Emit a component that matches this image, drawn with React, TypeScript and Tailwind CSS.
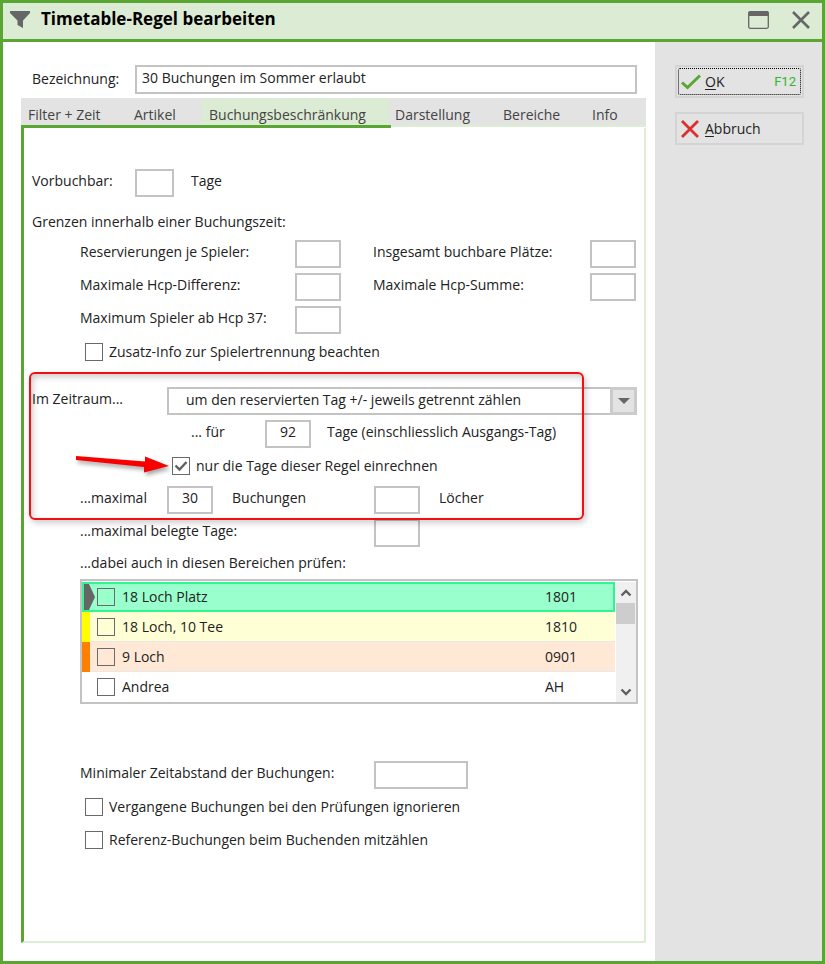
import { useState, type ReactNode } from "react";

const fieldClass =
  "h-[28px] shrink-0 border-2 border-[#c3c3c3] bg-white pb-1 text-center text-[#222] outline-none";

function Field({ id, value = "", wide = false }: { id: string; value?: string; wide?: boolean }) {
  return <input id={id} defaultValue={value} className={`${fieldClass} ${wide ? "w-[94px]" : "w-[46px]"}`} />;
}

function Label({ htmlFor, className = "", children }: { htmlFor: string; className?: string; children: ReactNode }) {
  return (
    <label htmlFor={htmlFor} className={`shrink-0 pb-1 whitespace-nowrap ${className}`}>
      {children}
    </label>
  );
}

function Tick({ id, checked = false }: { id: string; checked?: boolean }) {
  const [on, setOn] = useState(checked);
  return (
    <span className="relative block size-[18px] shrink-0">
      <input
        id={id}
        type="checkbox"
        checked={on}
        onChange={() => setOn(!on)}
        className="block size-[18px] appearance-none border border-[#6a6a6a]"
      />
      {on && (
        <svg viewBox="0 0 18 18" className="pointer-events-none absolute inset-0" fill="none" stroke="#606060" strokeWidth="2.4">
          <path d="M3.5 8.5 L7.5 12.5 L14.5 5" />
        </svg>
      )}
    </span>
  );
}

function CheckRow({ id, checked, className = "", children }: { id: string; checked?: boolean; className?: string; children: ReactNode }) {
  return (
    <div className={`flex h-[33px] items-center gap-1.5 pb-0.5 ${className}`}>
      <Tick id={id} checked={checked} />
      <label htmlFor={id} className="whitespace-nowrap">{children}</label>
    </div>
  );
}

const tabs = [
  { name: "Filter + Zeit", className: "w-[106px] pl-[7px]" },
  { name: "Artikel", className: "w-[75px] pl-[7px]" },
  { name: "Buchungsbeschränkung", className: "w-[188px] pl-[7px]", active: true },
  { name: "Darstellung", className: "w-[106px] pl-[5px]" },
  { name: "Bereiche", className: "w-[89px] pl-[7px]" },
  { name: "Info", className: "grow pl-[7px]" },
];

const areas = [
  { name: "18 Loch Platz", code: "1801", row: "bg-[#99ffcc] outline-2 -outline-offset-2 outline-[#33f58f]", mark: "" },
  { name: "18 Loch, 10 Tee", code: "1810", row: "bg-[#ffffd5] shadow-[inset_0_-1px_#e8e8e8]", mark: "bg-[#ffff00]" },
  { name: "9 Loch", code: "0901", row: "bg-[#ffe9d6] shadow-[inset_0_-1px_#e8e8e8]", mark: "bg-[#ff8000]" },
  { name: "Andrea", code: "AH", row: "bg-white", mark: "" },
];

function AreaList() {
  return (
    <div className="mr-1.5 ml-12 flex h-[125px] border-2 border-[#c3c3c3] bg-white pt-px">
      <table className="h-[120px] min-w-0 grow border-collapse">
        <tbody>
          {areas.map((a, i) => (
            <tr key={a.name} className={`h-[30px] ${a.row}`}>
              <td className="w-2 p-0">
                {i === 0 ? (
                  <svg viewBox="0 0 13 26" className="-mr-2 ml-px h-[26px] w-[13px]">
                    <path d="M0 0 H6 L12 13 L6 26 H0 Z" fill="#666" />
                  </svg>
                ) : (
                  <div className={`h-[30px] w-2 ${a.mark}`} />
                )}
              </td>
              <td className="p-0">
                <div className="flex items-center gap-[7px] pl-[7px]">
                  <Tick id={`area-${a.code}`} />
                  <label htmlFor={`area-${a.code}`}>{a.name}</label>
                </div>
              </td>
              <td className="w-[70px] p-0">{a.code}</td>
            </tr>
          ))}
        </tbody>
      </table>
      <div className="ml-px flex w-[20px] shrink-0 flex-col bg-[#f0f0f0]" aria-hidden="true">
        <svg viewBox="0 0 20 21" className="h-[21px]" fill="none" stroke="#606060" strokeWidth="2.4">
          <path d="M5.5 13.5 L10 9 L14.5 13.5" />
        </svg>
        <div className="h-[21px] w-[19px] bg-[#cdcdcd]" />
        <svg viewBox="0 0 20 21" className="mt-auto h-[21px]" fill="none" stroke="#606060" strokeWidth="2.4">
          <path d="M5.5 8.5 L10 13 L14.5 8.5" />
        </svg>
      </div>
    </div>
  );
}

export default function App() {
  return (
    <div className="flex min-h-screen flex-col border-[3px] border-[#5aa633] bg-white font-['Open_Sans','Noto_Sans',sans-serif] text-[14px] leading-[18px] text-[#222]">
      <header className="flex h-[39px] items-center border-b-[3px] border-[#5aa633] bg-[#dcebd3] pr-3 pb-0.5 pl-[7px]">
        <svg viewBox="0 0 20 18" className="h-[18px] w-[20px]" fill="#666">
          <path d="M0 0 H20 V2 L13 9.500 V17 L7.500 14 V9.500 L0 2 Z" />
        </svg>
        <h1 className="ml-[11px] pb-0.5 text-[17px] leading-[22px] font-bold text-black">Timetable-Regel bearbeiten</h1>
        <button aria-label="Maximieren" className="ml-auto">
          <svg viewBox="0 0 21 18" className="h-[18px] w-[21px]">
            <rect x="0.700" y="0.700" width="19.600" height="16.600" rx="1.500" fill="none" stroke="#666" strokeWidth="1.300" />
            <path d="M0.500 1.500 Q0.500 0 2 0 H19 Q20.500 0 20.500 1.500 V5 H0.500 Z" fill="#666" />
          </svg>
        </button>
        <button aria-label="Schliessen" className="ml-[23px]">
          <svg viewBox="0 0 18 18" className="size-[18px]" stroke="#666" strokeWidth="2.600">
            <path d="M1 1 L17 17 M17 1 L1 17" />
          </svg>
        </button>
      </header>

      <div className="flex grow">
        <main className="flex min-w-0 grow flex-col pr-[9px] pb-[18px] pl-[18px]">
          <div className="mt-[23px] flex h-[29px] items-center pr-[9px] pl-[11px]">
            <label htmlFor="bezeichnung" className="w-[103px] shrink-0 pb-0.5">Bezeichnung:</label>
            <input
              id="bezeichnung"
              defaultValue="30 Buchungen im Sommer erlaubt"
              className="h-[29px] min-w-0 grow border-2 border-[#c3c3c3] px-[5px] pb-1 text-[#222] outline-none"
            />
          </div>

          <div role="tablist" className="mt-1 flex h-[27px] bg-[#e3e3e3] text-[#444]">
            {tabs.map((t) => (
              <button
                key={t.name}
                role="tab"
                aria-selected={!!t.active}
                className={`shrink-0 border-r border-[#dfe7da] pt-1.5 text-left whitespace-nowrap ${t.className} ${t.active ? "bg-[#dcebd3]" : ""}`}
              >
                {t.name}
              </button>
            ))}
          </div>
          <div className="flex h-[3px]">
            <div className="w-[370px] bg-[#5aa633]" />
            <div className="grow border-t-2 border-[#dcefd3]" />
          </div>

          <section className="grow border-r-2 border-b-2 border-l-3 border-[#dcefd3] border-l-[#5aa633] pt-[38px] pl-2">
            <div className="flex h-[33px] items-center">
              <Label htmlFor="vorbuchbar" className="w-[103px]">Vorbuchbar:</Label>
              <input id="vorbuchbar" className={`${fieldClass} w-[39px]`} />
              <Label htmlFor="vorbuchbar" className="ml-[17px]">Tage</Label>
            </div>

            <h2 className="mt-2 flex h-[30px] items-center">Grenzen innerhalb einer Buchungszeit:</h2>
            <div className="mr-2 ml-12">
              <div className="flex h-[33px] items-center">
                <Label htmlFor="res" className="w-[215px]">Reservierungen je Spieler:</Label>
                <Field id="res" />
                <Label htmlFor="plaetze" className="mr-auto ml-8">Insgesamt buchbare Plätze:</Label>
                <Field id="plaetze" />
              </div>
              <div className="flex h-[33px] items-center">
                <Label htmlFor="diff" className="w-[215px]">Maximale Hcp-Differenz:</Label>
                <Field id="diff" />
                <Label htmlFor="summe" className="mr-auto ml-8">Maximale Hcp-Summe:</Label>
                <Field id="summe" />
              </div>
              <div className="flex h-[33px] items-center">
                <Label htmlFor="hcp37" className="w-[215px]">Maximum Spieler ab Hcp 37:</Label>
                <Field id="hcp37" />
              </div>
              <CheckRow id="zusatz" className="pl-[5px]">Zusatz-Info zur Spielertrennung beachten</CheckRow>
            </div>

            <div className="relative mt-[15px]">
              <div className="flex h-[33px] items-center pr-[7px]">
                <Label htmlFor="zeitraum" className="w-[135px]">Im Zeitraum...</Label>
                <div className="relative min-w-0 grow">
                  <select
                    id="zeitraum"
                    className="block h-[28px] w-full appearance-none border-2 border-[#c3c3c3] bg-white pb-0.5 pl-[17px] text-[#222] outline-none"
                  >
                    <option>um den reservierten Tag +/- jeweils getrennt zählen</option>
                  </select>
                  <span className="pointer-events-none absolute inset-y-0 right-0 flex w-[27px] items-center justify-center border-[3px] border-[#cbcbcb] bg-[#e3e3e3]">
                    <svg viewBox="0 0 12 6" className="h-1.5 w-3">
                      <path d="M0 0 H12 L6 6 Z" fill="#666" />
                    </svg>
                  </span>
                </div>
              </div>
              <div className="flex h-[33px] items-center pl-[159px]">
                <Label htmlFor="tage" className="w-[74px]">... für</Label>
                <Field id="tage" value="92" />
                <Label htmlFor="tage" className="ml-4">Tage (einschliesslich Ausgangs-Tag)</Label>
              </div>
              <CheckRow id="nurtage" checked className="pl-[140px]">nur die Tage dieser Regel einrechnen</CheckRow>
              <div className="flex h-[33px] items-center pl-12">
                <Label htmlFor="buchungen" className="w-[87px]">...maximal</Label>
                <Field id="buchungen" value="30" />
                <Label htmlFor="buchungen" className="ml-[19px] w-[142px]">Buchungen</Label>
                <Field id="loecher" />
                <Label htmlFor="loecher" className="ml-[19px]">Löcher</Label>
              </div>
              <div className="pointer-events-none absolute -top-3 -left-[3px] h-[148px] w-[555px] rounded-md border-2 border-[#f01010] shadow-[2px_3px_6px_rgba(0,0,0,0.2),inset_2px_3px_6px_rgba(0,0,0,0.2)]" />
              <svg
                viewBox="0 0 96 24"
                className="pointer-events-none absolute top-[69px] left-[43px] h-6 w-24 drop-shadow-[2px_3px_2px_rgba(0,0,0,0.35)]"
              >
                <path d="M1 3 L70 8.500 V3.500 L94 13 L69 19.500 V14 L1 7 Z" fill="#f80000" />
              </svg>
            </div>

            <div className="flex h-[33px] items-center pl-12">
              <Label htmlFor="belegt" className="w-[294px]">...maximal belegte Tage:</Label>
              <Field id="belegt" />
            </div>
            <p className="mb-0.5 flex h-7 items-center pl-12">...dabei auch in diesen Bereichen prüfen:</p>
            <AreaList />

            <div className="mt-[54px] ml-12">
              <div className="flex h-[33px] items-center">
                <Label htmlFor="abstand" className="w-[294px]">Minimaler Zeitabstand der Buchungen:</Label>
                <Field id="abstand" wide />
              </div>
              <CheckRow id="vergangene" className="pl-[5px]">Vergangene Buchungen bei den Prüfungen ignorieren</CheckRow>
              <CheckRow id="referenz" className="pl-[5px]">Referenz-Buchungen beim Buchenden mitzählen</CheckRow>
            </div>
          </section>
        </main>

        <aside className="flex w-[167px] shrink-0 flex-col gap-3.5 bg-[#e3e3e3] pt-[23px] pr-[18px] pl-5">
          <button className="h-[33px] border-2 border-[#d4d4d4] p-px">
            <span className="flex h-full items-center rounded-xs border border-dotted border-black pr-1 pl-0.5">
              <svg viewBox="0 0 20 16" className="h-4 w-5" fill="none" stroke="#5aa633" strokeWidth="3">
                <path d="M1 8.500 L6.500 13.500 L19 1.500" />
              </svg>
              <span className="ml-1"><u className="underline-offset-2">O</u>K</span>
              <span className="ml-auto font-['Liberation_Sans_Narrow','Roboto',sans-serif] text-[13px] text-[#2db82d]">F12</span>
            </span>
          </button>
          <button className="flex h-[33px] items-center border-2 border-[#d4d4d4] pl-1">
            <svg viewBox="0 0 18 18" className="size-[18px]" stroke="#dc3030" strokeWidth="2.800">
              <path d="M1 1 L17 17 M17 1 L1 17" />
            </svg>
            <span className="ml-[6px]"><u className="underline-offset-2">A</u>bbruch</span>
          </button>
        </aside>
      </div>
    </div>
  );
}
